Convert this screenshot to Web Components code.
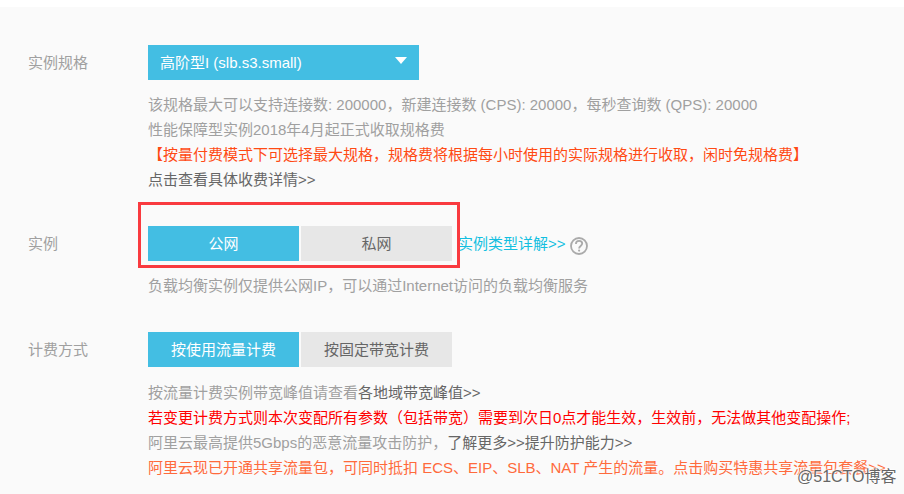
<!DOCTYPE html>
<html lang="zh"><head><meta charset="utf-8"><title>实例配置</title>
<style>
html,body{margin:0;height:494px;overflow:hidden;background:#fff}
body{font:15px/25px "Liberation Sans","Noto Sans CJK SC",sans-serif;color:#a0a0a0}
</style></head><body>
<template id="t-panel"><style>
:host{display:block;position:relative;margin-top:7px;height:487px;box-sizing:border-box;padding-top:38px;background:#fafafa;overflow:hidden}
.box{position:absolute;left:138px;top:195px;width:322px;height:66px;box-sizing:border-box;border:3px solid #f93a3f}
.wm{position:absolute;left:797px;top:459px;font-size:16px;line-height:22px;color:#666;text-shadow:0 0 2px #fff,0 0 2px #fff,0 0 3px #fff}
</style><slot></slot><div class="box"></div><div class="wm">@51CTO博客</div></template>

<template id="t-row"><style>
:host{display:grid;grid-template-columns:120px 1fr;padding-left:28px;margin-bottom:34px}
.l{line-height:35px;color:#a0a0a0}
</style><div class="l"><slot name="label"></slot></div><div><slot></slot></div></template>

<template id="t-select"><style>
:host{display:flex;align-items:center;justify-content:space-between;box-sizing:border-box;width:271px;height:35px;padding:0 12px;background:#43bee3;color:#fff}
i{width:0;height:0;border-left:6.5px solid transparent;border-right:6.5px solid transparent;border-top:7px solid #fff;margin-top:-4px}
</style><span><slot></slot></span><i></i></template>

<template id="t-group"><style>
:host{display:flex;align-items:center;gap:2px;height:35px}
</style><slot></slot></template>

<template id="t-btn"><style>
:host{display:flex;align-items:center;justify-content:center;width:151px;height:35px;background:#e7e7e7;color:#666}
:host([on]){background:#43bee3;color:#fff}
</style><slot></slot></template>

<template id="t-desc"><style>
:host{display:block;margin-top:12px;line-height:25px;color:#a0a0a0}
:host([loose]){margin-top:13px}
::slotted(b){display:block;font-weight:400}
</style><slot></slot></template>

<template id="t-help"><style>
:host{display:inline-flex;margin:5px 0 0 4px}
svg{display:block}
</style><svg width="18" height="18" viewBox="0 0 18 18" fill="none"><circle cx="9" cy="9" r="8" stroke="#aaa" stroke-width="1.8"/><path d="M5.9 7.1c0-2 1.4-3.2 3.2-3.2s3.1 1.1 3.1 2.7c0 2.4-3.1 2.5-3.1 4.9" stroke="#aaa" stroke-width="1.8"/><circle cx="9.1" cy="13.6" r="1.1" fill="#aaa"/></svg></template>

<x-panel>
<x-row>
<span slot="label">实例规格</span>
<x-select>高阶型I (slb.s3.small)</x-select>
<x-desc>
<b>该规格最大可以支持连接数: 200000，新建连接数 (CPS): 20000，每秒查询数 (QPS): 20000</b>
<b>性能保障型实例2018年4月起正式收取规格费</b>
<b style="color:#ff4a14">【按量付费模式下可选择最大规格，规格费将根据每小时使用的实际规格进行收取，闲时免规格费】</b>
<b style="color:#666">点击查看具体收费详情&gt;&gt;</b>
</x-desc>
</x-row>
<x-row>
<span slot="label">实例</span>
<x-group><x-btn on>公网</x-btn><x-btn>私网</x-btn>
<span style="color:#12bfe0;margin-left:4px;display:inline-flex;align-items:center">实例类型详解&gt;&gt;<x-help></x-help></span></x-group>
<x-desc><b>负载均衡实例仅提供公网IP，可以通过Internet访问的负载均衡服务</b></x-desc>
</x-row>
<x-row>
<span slot="label">计费方式</span>
<x-group><x-btn on>按使用流量计费</x-btn><x-btn>按固定带宽计费</x-btn></x-group>
<x-desc loose>
<b>按流量计费实例带宽峰值请查看<span style="color:#666">各地域带宽峰值&gt;&gt;</span></b>
<b style="color:#f00">若变更计费方式则本次变配所有参数（包括带宽）需要到次日0点才能生效，生效前，无法做其他变配操作;</b>
<b>阿里云最高提供5Gbps的恶意流量攻击防护，<span style="color:#666">了解更多&gt;&gt;提升防护能力&gt;&gt;</span></b>
<b style="color:#ff6a3c">阿里云现已开通共享流量包，可同时抵扣 ECS、EIP、SLB、NAT 产生的流量。点击购买特惠共享流量包套餐&gt;&gt;</b>
</x-desc>
</x-row>
</x-panel>
<script>
for(const [n,id] of [['x-panel','t-panel'],['x-row','t-row'],['x-select','t-select'],['x-group','t-group'],['x-btn','t-btn'],['x-desc','t-desc'],['x-help','t-help']]){
customElements.define(n,class extends HTMLElement{constructor(){super();this.attachShadow({mode:'open'}).appendChild(document.getElementById(id).content.cloneNode(true))}});
}
</script>
</body></html>
